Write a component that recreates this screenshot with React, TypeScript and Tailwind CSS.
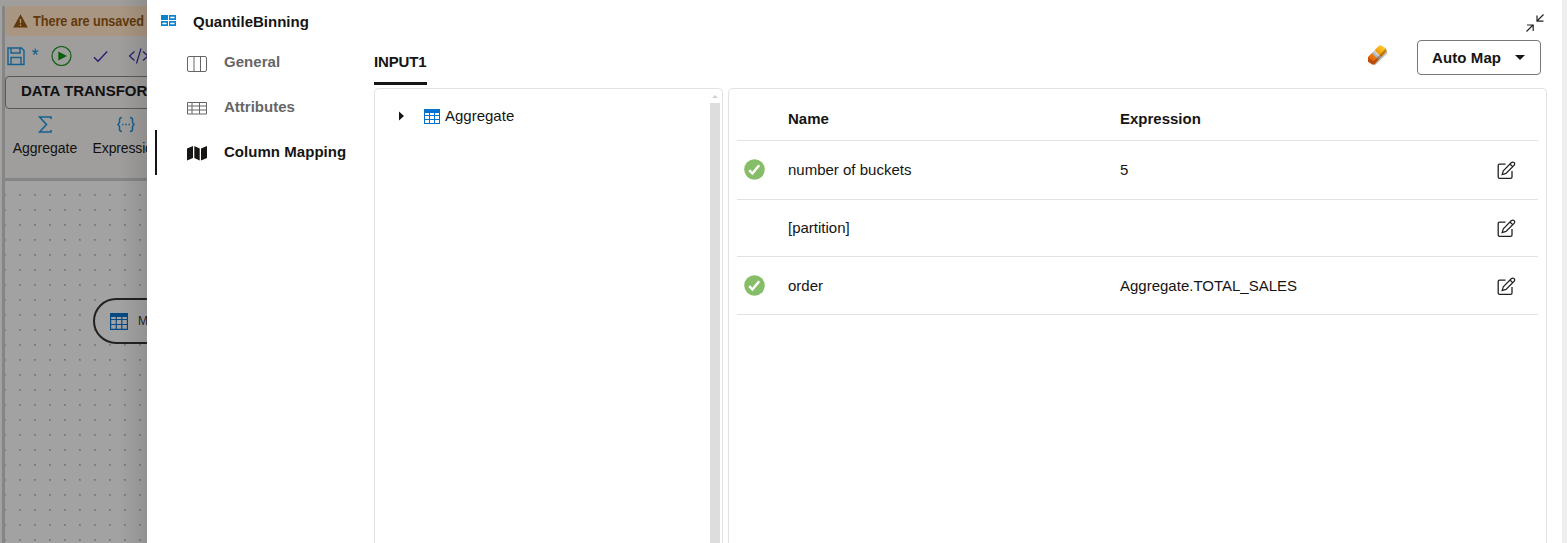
import React from "react";

function GridIcon({ className = "" }: { className?: string }) {
  return (
    <svg className={className} viewBox="0 0 16 15" fill="none">
      <rect x="0" y="0" width="16" height="15" fill="#0572ce" />
      <path
        d="M1 4h4v2H1zM6 4h4v2H6zM11 4h4v2h-4zM1 7h4v3H1zM6 7h4v3H6zM11 7h4v3h-4zM1 11h4v3H1zM6 11h4v3H6zM11 11h4v3h-4z"
        fill="#fff"
      />
    </svg>
  );
}

function CheckBadge() {
  return (
    <svg className="mb-[2px] h-[21px] w-[21px]" viewBox="0 0 21 21">
      <circle cx="10.5" cy="10.5" r="10.3" fill="#86bd68" />
      <path d="M5.2 11.2l3.2 3.3 6.8-8.2" fill="none" stroke="#fff" strokeWidth="2.5" />
    </svg>
  );
}

function EditIcon() {
  return (
    <svg className="h-[19px] w-[19px]" viewBox="0 0 19 19" fill="none" stroke="#222" strokeWidth="1.3">
      <path d="M8.5 3.2H2.6Q1.2 3.2 1.2 4.6V16Q1.2 17.4 2.6 17.4H13.6Q15 17.4 15 16V10" />
      <path d="M5.2 13.5L6.3 9.8L14.2 1.8Q15.8 .3 17.2 1.7Q18.3 3 16.9 4.5L9 12.4ZM13 3l2.8 2.8" strokeWidth="1.2" />
    </svg>
  );
}

function Toolbar() {
  return (
    <div className="flex h-[40px] pt-[10px]">
      <svg className="h-[20px] w-[142px]" viewBox="5 46 142 20" fill="none">
        <g stroke="#14618f" strokeWidth="1.4">
          <path d="M8 48H21.5L24 50.5V64.5H8ZM11 48v5h9v-5M11 64.5v-7h10v7" />
          <path d="M35.3 48.5v3.5M32.3 50.6l3 1.4 3-1.4M33.4 54.6l1.9-2.6 1.9 2.6" strokeWidth="1.2" />
        </g>
        <circle cx="61.5" cy="56" r="9.5" stroke="#126018" strokeWidth="1.2" />
        <path d="M58.3 51.4L67 56L58.3 60.6Z" fill="#07600a" />
        <path d="M94 57.2l4 4 9.2-9.7" stroke="#241d70" strokeWidth="1.3" />
        <path d="M134.5 51.5L129.5 56l5 4.5M141 48.5l-4.5 15M143 51.5l5 4.5-5 4.5" stroke="#241d70" strokeWidth="1.2" />
      </svg>
    </div>
  );
}

function Workspace() {
  return (
    <aside className="relative flex w-[147px] shrink-0 flex-col overflow-hidden bg-[#a09e9c]">
      <div className="h-[6px] shrink-0" />
      <div className="flex min-h-0 flex-1">
        <div className="w-[2px] shrink-0 bg-[#a4a2a1]" />
        <div className="w-[3px] shrink-0 bg-[#858585]" />
        <div className="flex min-w-0 flex-1 flex-col whitespace-nowrap">
          <div className="flex h-[30px] shrink-0 items-center rounded-l-[5px] bg-[#a99682] pl-[8px] text-[#61390a]">
            <svg className="h-[14px] w-[15px] shrink-0" viewBox="0 0 15 14">
              <path d="M7.5 .2L14.8 13.5H.2Z" fill="#61390a" />
              <path d="M6.8 5h1.4v4.3H6.8zM6.8 10.5h1.4V12H6.8z" fill="#a99682" />
            </svg>
            <span className="ml-[5px] origin-left scale-x-[.91] text-[14px] font-bold tracking-[-0.1px]">
              There are unsaved changes
            </span>
          </div>
          <Toolbar />
          <div className="flex h-[33px] w-[200px] shrink-0 items-center rounded-[4px] border border-[#595959] pb-[2px] pl-[15px] text-[15px] font-bold text-[#111]">
            DATA TRANSFORM
          </div>
          <div className="flex h-[72px] w-[200px] shrink-0 border-b-[3px] border-[#858585] pt-[7px] text-[14px] text-[#111]">
            <div className="flex w-[80px] flex-col items-center">
              <svg className="h-[17px] w-[14px]" viewBox="0 0 14 17" fill="none" stroke="#14618f" strokeWidth="1.6">
                <path d="M13 3V1H1.5L8.5 8.5L1.5 16H13V14" />
              </svg>
              <span className="mt-[5px] leading-[20px]">Aggregate</span>
            </div>
            <div className="ml-[3px] flex w-[76px] flex-col items-center">
              <svg className="h-[17px] w-[18px]" viewBox="0 0 18 17" fill="none" stroke="#14618f" strokeWidth="1.5">
                <path d="M5 1.5Q2.5 1.5 2.5 4V6.5L1 8.5L2.5 10.5V13Q2.5 15.5 5 15.5M13 1.5Q15.5 1.5 15.5 4V6.5L17 8.5L15.5 10.5V13Q15.5 15.5 13 15.5" />
                <path d="M5 8.5h1.5M8.2 8.5h1.6M11.5 8.5H13" />
              </svg>
              <span className="mt-[5px] ml-[1px] leading-[20px] tracking-[-0.15px]">Expression</span>
            </div>
          </div>
          <div className="relative flex-1 bg-[#a2a2a2]">
            <svg className="absolute inset-0 h-full w-full">
              <defs>
                <pattern id="dots" x="14" y="13" width="15" height="15" patternUnits="userSpaceOnUse">
                  <rect width="2" height="2" fill="#858585" />
                  <rect width="1" height="1" fill="#727272" />
                </pattern>
              </defs>
              <rect width="100%" height="100%" fill="url(#dots)" />
            </svg>
            <div className="absolute top-[117px] left-[88px] flex h-[46px] w-[120px] items-center rounded-full border-2 border-[#222] bg-[#a2a2a2] pl-[15px]">
              <svg className="h-[17px] w-[18px]" viewBox="0 0 18 17" fill="none">
                <path d="M.6 1h16.8v15.4H.6zM.6 6.5h16.8M.6 11.5h16.8M6.3 3v13M11.8 3v13" stroke="#064a84" strokeWidth="1.2" />
                <path d="M0 0h18v4H0z" fill="#064a84" />
              </svg>
              <span className="ml-[10px] text-[12px] text-[#222]">MONTHS</span>
            </div>
          </div>
        </div>
      </div>
      <div className="absolute inset-y-0 right-0 w-[28px] bg-linear-to-r from-transparent to-black/10" />
    </aside>
  );
}

function NavIcon({ kind }: { kind: string }) {
  return (
    <svg className="mt-[2px] h-[17px] w-[21px] shrink-0" viewBox="0 0 21 17" fill="none" stroke="#666" strokeWidth="1">
      {kind === "general" && (
        <>
          <rect x=".5" y="1.5" width="19" height="15" rx="1.5" />
          <path d="M7 1.5v15M13.5 1.5v15" />
        </>
      )}
      {kind === "attributes" && <path d="M.5 2.5h19v11.5H.5zM.5 6h19M.5 10h19M5 2.5v11.5M12.5 2.5v11.5" />}
      {kind === "mapping" && (
        <path d="M0 3.5L6 1V13L0 15.5ZM7.3 1L12.7 3.5V15.5L7.3 13ZM14 3.5L20 1V13L14 15.5Z" fill="#161513" stroke="none" />
      )}
    </svg>
  );
}

const navItems = [
  { label: "General", kind: "general", style: "tracking-[0.05px] text-[#666]" },
  { label: "Attributes", kind: "attributes", style: "tracking-[0px] text-[#666]" },
  { label: "Column Mapping", kind: "mapping", style: "tracking-[0.04px] text-[#161513]" },
];

function Sidebar() {
  return (
    <nav className="flex w-[227px] shrink-0 flex-col pl-[8px]">
      <div className="flex h-[40px] shrink-0 items-center pt-[3px] pl-[6px]">
        <svg className="mb-[3px] h-[11px] w-[15px]" viewBox="0 0 15 11">
          <path d="M0 0h7v5H0zM8 0h7v5H8zM0 6h7v5H0zM8 6h7v5H8z" fill="#0c83cf" />
          <path d="M9.3 1.7h4.2v1.5H9.3zM1.3 7.7h4.2v1.5H1.3zM9.3 7.7h4.2v1.5H9.3z" fill="#fff" />
        </svg>
        <span className="mt-[2px] ml-[17px] text-[15px] font-bold">QuantileBinning</span>
      </div>
      {navItems.map((item) => (
        <div
          key={item.kind}
          className={
            item.kind === "mapping"
              ? "flex h-[45px] items-center border-l-2 border-[#161513] pl-[30px]"
              : "flex h-[45px] items-center pl-[32px]"
          }
        >
          <NavIcon kind={item.kind} />
          <span className={`ml-[16px] text-[15px] font-bold whitespace-nowrap ${item.style}`}>{item.label}</span>
        </div>
      ))}
    </nav>
  );
}

const rows = [
  { name: "number of buckets", value: "5", ok: true, height: "h-[59px]" },
  { name: "[partition]", value: "", ok: false, height: "h-[57px]" },
  { name: "order", value: "Aggregate.TOTAL_SALES", ok: true, height: "h-[58px] pt-px" },
];

function MappingTable() {
  return (
    <section className="mr-[15px] ml-[5px] flex flex-1 flex-col rounded-t-[5px] border border-b-0 border-[#e2e2e2] pr-[8px] pl-[8px] text-[15px]">
      <div className="flex h-[52px] items-center border-b border-[#e2e2e2] pt-[9px] font-bold">
        <span className="ml-[51px] w-[332px]">Name</span>
        <span>Expression</span>
      </div>
      {rows.map((row) => (
        <div key={row.name} className={`flex items-center border-b border-[#e2e2e2] ${row.height}`}>
          <div className="w-[51px] pl-[7px]">{row.ok && <CheckBadge />}</div>
          <span className="w-[332px]">{row.name}</span>
          <span className="flex-1">{row.value}</span>
          <div className="mr-[22px]">
            <EditIcon />
          </div>
        </div>
      ))}
    </section>
  );
}

function Drawer() {
  return (
    <main className="-ml-px flex min-w-0 flex-1 border-l border-[#e4e4e4] bg-white text-[#161513]">
      <Sidebar />
      <div className="flex flex-1 flex-col">
        <header className="flex h-[88px] shrink-0 justify-between">
          <div className="flex items-end pb-[3px]">
            <div className="h-[40px] w-[53px] border-b-[3px] border-[#161513] pt-[6px] text-[15px] leading-[22px] font-bold tracking-[-0.15px]">
              INPUT1
            </div>
          </div>
          <div className="mr-[18px] flex flex-col items-end pt-[14px]">
            <svg className="h-[18px] w-[18px]" viewBox="0 0 18 18" fill="none" stroke="#222" strokeWidth="1.2">
              <path d="M17.5 .5L11 7M11 1.5V7.2H17.5M.5 17.5L7 11M1 11H7.2V17" />
            </svg>
            <div className="mt-[8px] mr-[3px] flex items-center">
              <svg className="mr-[29px] mb-[6px] h-[22px] w-[22px]" viewBox="0 0 22 22">
                <defs>
                  <linearGradient id="rubber" gradientUnits="userSpaceOnUse" x1="4" y1="18" x2="17" y2="4">
                    <stop stopColor="#d95a05" />
                    <stop offset=".38" stopColor="#ee7a12" />
                    <stop offset=".4" stopColor="#a8a8a8" />
                    <stop offset=".6" stopColor="#d8d8d8" />
                    <stop offset=".62" stopColor="#f29b06" />
                    <stop offset="1" stopColor="#ffc42a" />
                  </linearGradient>
                </defs>
                <path d="M6 20L9 21.5L21.5 9.5L20.5 6Z" fill="#777" opacity=".4" />
                <path d="M2 13L13 1.8L15 1.3L20 4.6L20.5 7.5L8.8 20L6.5 20.6L2 17.5Z" fill="url(#rubber)" />
                <path d="M2 13.5L7.5 17.2V20.5L6.5 20.6L2 17.5Z" fill="#c04a08" />
                <path d="M7.5 17.2L20 4.6L20.5 7.5L8.8 20L7.5 20.5Z" fill="#7a3400" opacity=".45" />
              </svg>
              <button className="flex h-[35px] w-[124px] items-center rounded-[4px] border border-[#777] pt-px pl-[14px] text-[15px] font-bold tracking-[0.1px]">
                Auto Map
                <svg className="mb-px ml-[14px] h-[5px] w-[10px]" viewBox="0 0 10 5">
                  <path d="M0 0h10L5 5z" fill="#161513" />
                </svg>
              </button>
            </div>
          </div>
        </header>
        <div className="flex min-h-0 flex-1">
          <section className="flex w-[349px] shrink-0 justify-between rounded-t-[5px] border border-b-0 border-[#e2e2e2]">
            <div className="flex h-[54px] items-center pl-[24px]">
              <svg className="h-[10px] w-[5px]" viewBox="0 0 5 10">
                <path d="M0 .5L5 5L0 9.5Z" fill="#161513" />
              </svg>
              <GridIcon className="ml-[20px] h-[15px] w-[16px]" />
              <span className="ml-[5px] text-[15px]">Aggregate</span>
            </div>
            <div className="mr-[2px] flex w-[10px] flex-col items-center">
              <svg className="mt-[6px] h-[3px] w-[6px]" viewBox="0 0 6 3">
                <path d="M3 0L6 3H0Z" fill="#d0d0d0" />
              </svg>
              <div className="mt-[5px] w-full flex-1 bg-[#dddddd]" />
            </div>
          </section>
          <MappingTable />
        </div>
      </div>
    </main>
  );
}

export default function App() {
  return (
    <div className="flex h-[543px] w-[1567px] overflow-hidden bg-[#efeeec] font-['Liberation_Sans',Arial,sans-serif]">
      <Workspace />
      <Drawer />
      <div className="w-[5px] shrink-0 bg-[#efeeec]" />
    </div>
  );
}
